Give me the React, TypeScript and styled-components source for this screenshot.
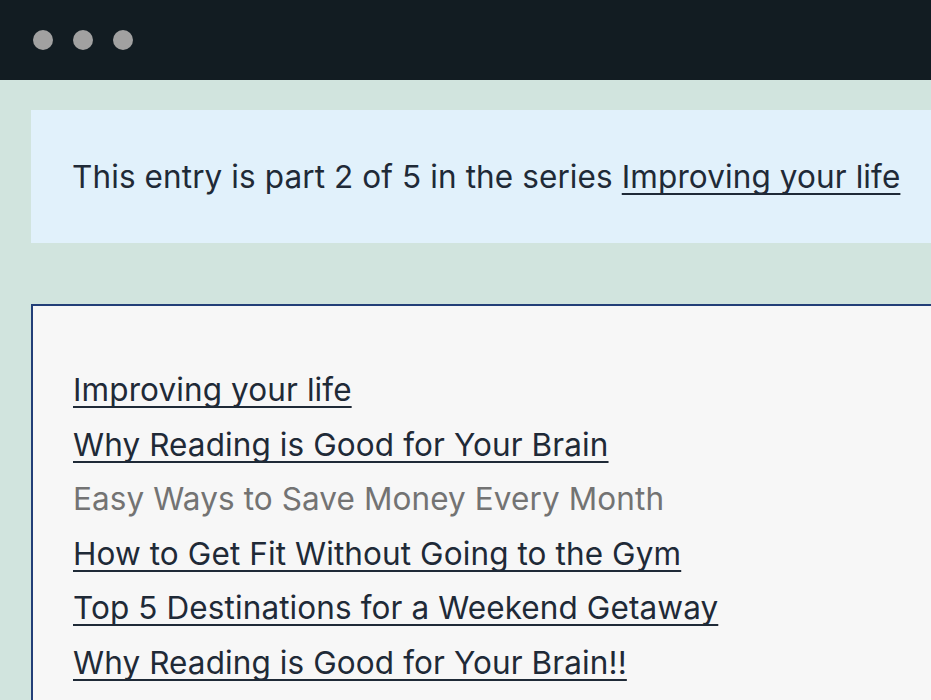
import styled, { createGlobalStyle } from 'styled-components';

const GlobalStyle = createGlobalStyle`
  html, body {
    margin: 0;
    padding: 0;
    overflow: hidden;
    background: #d1e4de;
  }
  body {
    font-family: Inter, "Noto Sans", sans-serif;
    color: #1f2a37;
  }
`;

const Page = styled.div`
  width: 931px;
  height: 700px;
  overflow: hidden;
  background: #d1e4de;
`;

const TitleBar = styled.div`
  height: 80px;
  background: #121c22;
  display: flex;
  align-items: center;
  gap: 20px;
  padding-left: 33px;
`;

const Dot = styled.span`
  width: 20px;
  height: 20px;
  border-radius: 50%;
  background: #a1a1a1;
`;

const Content = styled.main`
  width: 960px;
  padding: 30px 0 0 31px;
  display: flex;
  flex-direction: column;
  gap: 61px;
`;

const SeriesNotice = styled.p`
  margin: 0;
  height: 133px;
  box-sizing: border-box;
  padding: 0 0 0 41px;
  display: flex;
  align-items: center;
  background: #e1f1fb;
  font-size: 31.5px;
  letter-spacing: 0.1px;
  white-space: nowrap;
`;

const SeriesList = styled.ol`
  margin: 0;
  list-style: none;
  background: #f7f7f7;
  border: 2px solid #233f78;
  border-right: none;
  padding: 57px 0 40px 40px;
  display: flex;
  flex-direction: column;
`;

const Item = styled.li`
  font-size: 31.5px;
  letter-spacing: 0.1px;
  line-height: 54.5px;
  white-space: nowrap;
`;

const Link = styled.a<{ $current?: boolean }>`
  color: ${(p) => (p.$current ? '#737373' : '#1f2a37')};
  text-decoration: ${(p) => (p.$current ? 'none' : 'underline')};
  text-decoration-thickness: 2px;
  text-underline-offset: 5px;
  text-decoration-skip-ink: none;
`;

const posts = [
  'Improving your life',
  'Why Reading is Good for Your Brain',
  'Easy Ways to Save Money Every Month',
  'How to Get Fit Without Going to the Gym',
  'Top 5 Destinations for a Weekend Getaway',
  'Why Reading is Good for Your Brain!!',
];

export default function App() {
  return (
    <Page>
      <GlobalStyle />
      <TitleBar>
        <Dot />
        <Dot />
        <Dot />
      </TitleBar>
      <Content>
        <SeriesNotice>
          This entry is part 2 of 5 in the series&nbsp;<Link href="#">Improving your life</Link>
        </SeriesNotice>
        <SeriesList>
          {posts.map((title, i) => (
            <Item key={i}>
              {i === 2 ? <Link as="span" $current>{title}</Link> : <Link href="#">{title}</Link>}
            </Item>
          ))}
        </SeriesList>
      </Content>
    </Page>
  );
}
